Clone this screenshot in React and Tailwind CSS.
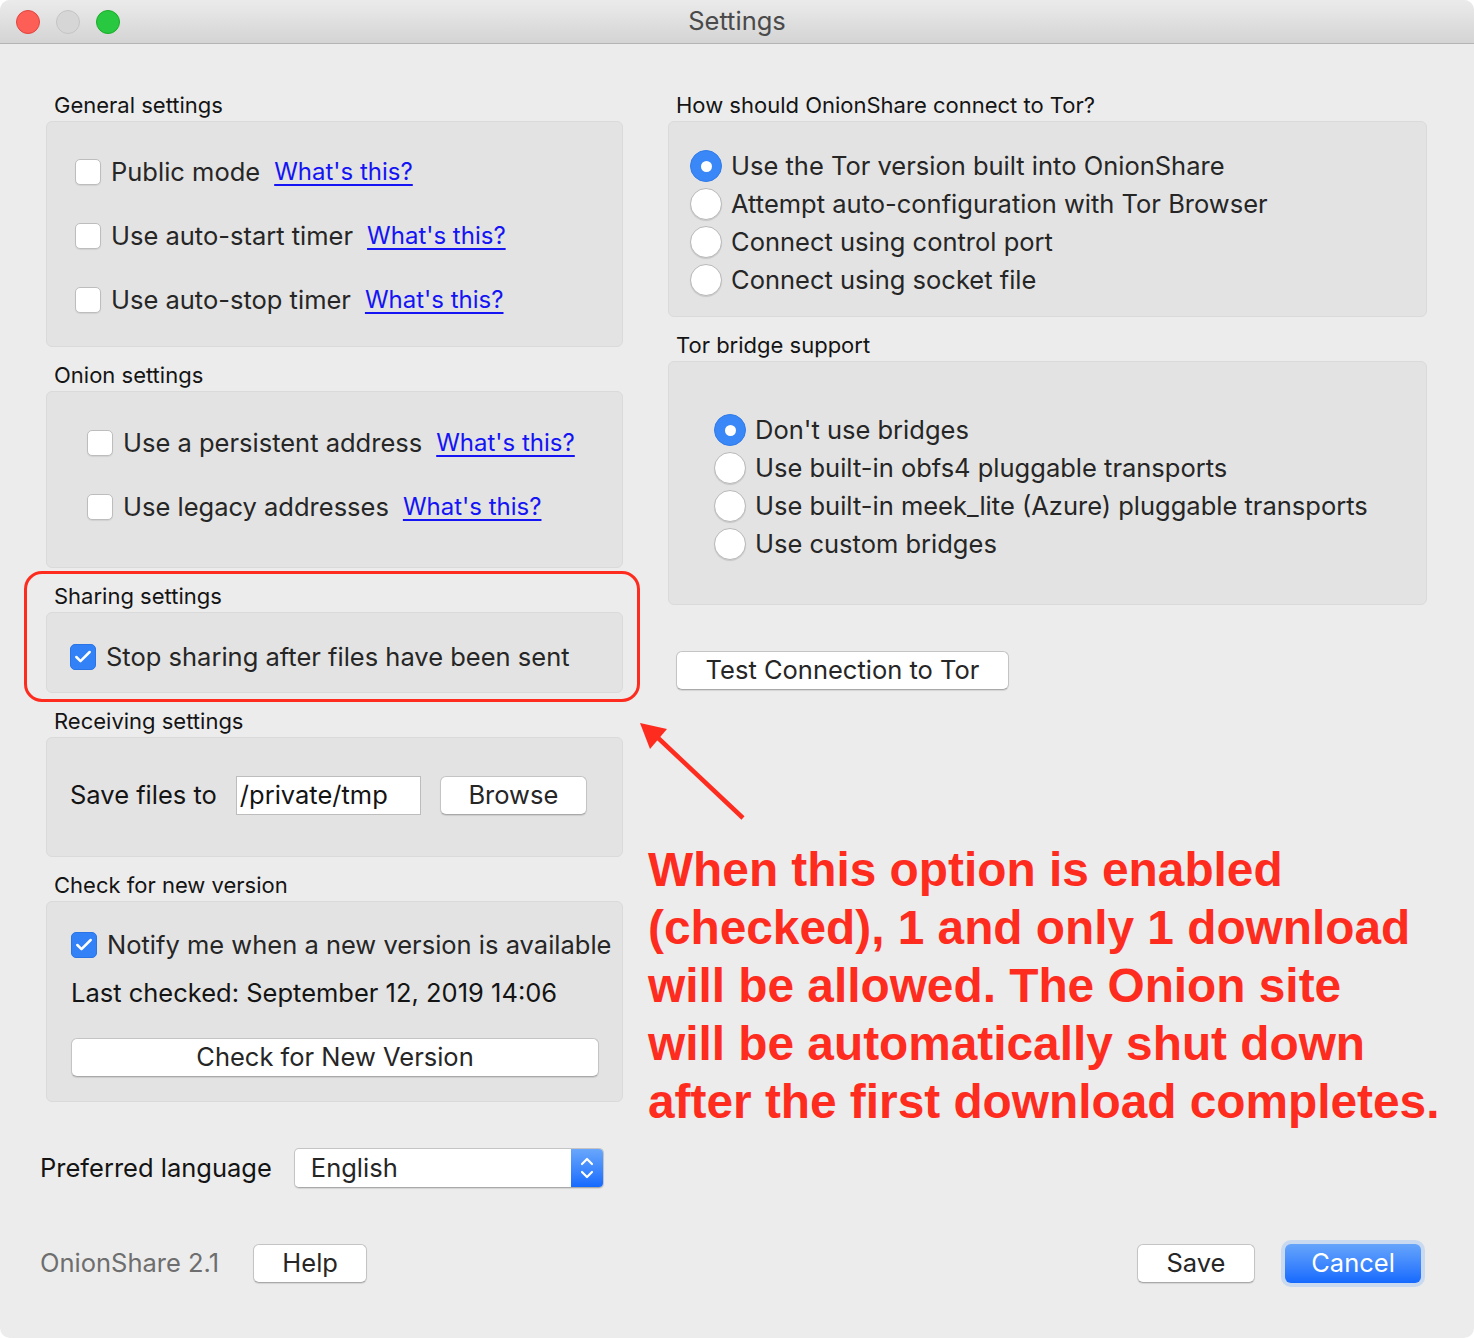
import { Check } from 'lucide-react';

const ui = { fontFamily: 'Inter, "Noto Sans", sans-serif' };

const Checkbox = ({ checked }) => (
  <span
    className={`w-[26px] h-[26px] shrink-0 rounded-[5px] flex items-center justify-center ${
      checked
        ? 'bg-[#3281f6] border border-[#2a74e6]'
        : 'bg-white border border-[#bdbdbd] shadow-[0_1px_1px_rgba(0,0,0,0.08)]'
    }`}
  >
    {checked && <Check size={20} strokeWidth={3} className="text-white" />}
  </span>
);

const Radio = ({ on }) => (
  <span
    className={`w-[32px] h-[32px] shrink-0 rounded-full flex items-center justify-center ${
      on
        ? 'bg-[#3a87f7] border border-[#2f7bea]'
        : 'bg-white border border-[#b9b9b9] shadow-[0_1px_1px_rgba(0,0,0,0.12)]'
    }`}
  >
    {on && <span className="w-[11px] h-[11px] rounded-full bg-white" />}
  </span>
);

const Link = ({ children }) => (
  <span className="text-[#1414f5] underline underline-offset-[4px] decoration-[1.5px]">{children}</span>
);

const Group = ({ label, className = '', children }) => (
  <div>
    <div className="text-[22px] leading-[28px] text-[#141414] pl-[8px] mb-[2px]">{label}</div>
    <div className={`bg-[#e3e3e3] border border-[#dadada] rounded-[6px] ${className}`}>{children}</div>
  </div>
);

const Button = ({ children, className = '' }) => (
  <button
    className={`h-[39px] bg-white rounded-[6px] border border-[#c4c4c4] border-b-[#a9a9a9] shadow-[0_1px_1px_rgba(0,0,0,0.1)] text-[25.5px] text-[#262626] flex items-center justify-center whitespace-nowrap ${className}`}
  >
    {children}
  </button>
);

const CheckRow = ({ checked, text, link, indent = 'pl-[28px]' }) => (
  <div className={`h-[64px] flex items-center whitespace-nowrap ${indent}`}>
    <Checkbox checked={checked} />
    <span className="ml-[10px] text-[25.5px] text-[#262626]">{text}</span>
    {link && <span className="ml-[14px] text-[24px]"><Link>What's this?</Link></span>}
  </div>
);

const RadioRow = ({ on, text }) => (
  <div className="h-[38px] flex items-center whitespace-nowrap">
    <Radio on={on} />
    <span className="ml-[9px] text-[25.5px] text-[#262626]">{text}</span>
  </div>
);

export default function App() {
  return (
    <div className="w-[1474px] h-[1338px] bg-white" style={ui}>
      <div className="relative h-full rounded-[10px] bg-[#ececec] overflow-hidden">
        {/* title bar */}
        <div className="h-[44px] bg-gradient-to-b from-[#ebebeb] to-[#d4d4d4] border-b border-[#b4b4b4] relative flex items-center justify-center">
          <div className="absolute left-[16px] top-[10px] flex gap-[16px]">
            <span className="w-[24px] h-[24px] rounded-full bg-[#fd5f57] border border-[#e0443e]" />
            <span className="w-[24px] h-[24px] rounded-full bg-[#d6d6d6] border border-[#c4c4c4]" />
            <span className="w-[24px] h-[24px] rounded-full bg-[#28c840] border border-[#1aab29]" />
          </div>
          <span className="text-[25.5px] text-[#4a4a4a]">Settings</span>
        </div>

        <div className="px-[40px] pt-[47px]">
          <div className="flex gap-[45px] items-start">
            {/* left column */}
            <div className="w-[583px]">
              <div className="ml-[6px] w-[577px] flex flex-col gap-[14px]">
                <Group label="General settings" className="pt-[18px] pb-[14px]">
                  <CheckRow text="Public mode" link />
                  <CheckRow text="Use auto-start timer" link />
                  <CheckRow text="Use auto-stop timer" link />
                </Group>

                <Group label="Onion settings" className="pt-[19px] pb-[28px]">
                  <CheckRow text="Use a persistent address" link indent="pl-[40px]" />
                  <CheckRow text="Use legacy addresses" link indent="pl-[40px]" />
                </Group>

                <div className="relative">
                  <div className="absolute left-[-22px] right-[-17px] top-[-11px] bottom-[-9px] border-[3px] border-[#fe2c1f] rounded-[18px] pointer-events-none" />
                  <Group label="Sharing settings" className="pt-[12px] pb-[3px]">
                    <CheckRow checked text="Stop sharing after files have been sent" indent="pl-[23px]" />
                  </Group>
                </div>

                <Group label="Receiving settings" className="pt-[37px] pb-[41px]">
                  <div className="h-[40px] flex items-center pl-[23px] whitespace-nowrap">
                    <span className="text-[25.5px] text-[#141414]">Save files to</span>
                    <div className="ml-[19px] w-[185px] h-[39px] bg-white border border-[#bdbdbd] flex items-center px-[3px] text-[25.5px] text-[#141414]">
                      /private/tmp
                    </div>
                    <Button className="ml-[19px] w-[147px]">Browse</Button>
                  </div>
                </Group>

                <Group label="Check for new version" className="pt-[24px] pb-[24px] px-[24px]">
                  <div className="h-[38px] flex items-center whitespace-nowrap">
                    <Checkbox checked />
                    <span className="ml-[10px] text-[25.5px] text-[#262626]">Notify me when a new version is available</span>
                  </div>
                  <div className="h-[38px] mt-[10px] flex items-center text-[25.5px] text-[#141414] whitespace-nowrap">
                    Last checked: September 12, 2019 14:06
                  </div>
                  <Button className="mt-[26px] w-[528px]">Check for New Version</Button>
                </Group>
              </div>

              <div className="mt-[46px] flex items-center whitespace-nowrap">
                <span className="text-[25.5px] text-[#141414]">Preferred language</span>
                <div className="ml-[22px] w-[310px] h-[40px] bg-white rounded-[5px] border border-[#c4c4c4] border-b-[#a9a9a9] shadow-[0_1px_1px_rgba(0,0,0,0.1)] flex overflow-hidden">
                  <span className="flex-1 flex items-center pl-[16px] text-[25.5px] text-[#262626]">English</span>
                  <span className="w-[32px] bg-gradient-to-b from-[#69a7fb] to-[#1369fe] flex items-center justify-center">
                    <svg width="16" height="28" viewBox="0 0 16 28" fill="none" stroke="white" strokeWidth="2.2" strokeLinecap="round" strokeLinejoin="round">
                      <path d="M3 10 L8 5 L13 10" />
                      <path d="M3 18 L8 23 L13 18" />
                    </svg>
                  </span>
                </div>
              </div>
            </div>

            {/* right column */}
            <div className="w-[759px] flex flex-col">
              <Group label="How should OnionShare connect to Tor?" className="pt-[25px] pb-[17px] pl-[21px]">
                <RadioRow on text="Use the Tor version built into OnionShare" />
                <RadioRow text="Attempt auto-configuration with Tor Browser" />
                <RadioRow text="Connect using control port" />
                <RadioRow text="Connect using socket file" />
              </Group>

              <div className="mt-[14px]">
                <Group label="Tor bridge support" className="pt-[49px] pb-[41px] pl-[45px]">
                  <RadioRow on text="Don't use bridges" />
                  <RadioRow text="Use built-in obfs4 pluggable transports" />
                  <RadioRow text="Use built-in meek_lite (Azure) pluggable transports" />
                  <RadioRow text="Use custom bridges" />
                </Group>
              </div>

              <Button className="mt-[46px] ml-[8px] w-[333px]">Test Connection to Tor</Button>

              <div
                className="mt-[151px] -ml-[20px] w-[800px] text-[47.8px] leading-[58px] font-bold text-[#fe2c1f] whitespace-nowrap"
                style={{ fontFamily: '"Liberation Sans", Arial, sans-serif' }}
              >
                When this option is enabled
                <br />
                (checked), 1 and only 1 download
                <br />
                will be allowed. The Onion site
                <br />
                will be automatically shut down
                <br />
                after the first download completes.
              </div>
            </div>
          </div>

          {/* bottom row */}
          <div className="mt-[52px] flex items-center whitespace-nowrap">
            <span className="text-[25.5px] text-[#6e6e6e]">OnionShare 2.1</span>
            <Button className="ml-[34px] w-[114px]">Help</Button>
            <div className="flex-1" />
            <Button className="w-[118px]">Save</Button>
            <div className="ml-[26px] p-[4px] rounded-[10px] bg-[#c9d9ef]">
              <button className="w-[136px] h-[39px] rounded-[6px] bg-gradient-to-b from-[#66a4fb] to-[#1569fe] text-white text-[25.5px] flex items-center justify-center">
                Cancel
              </button>
            </div>
            <div className="w-[9px]" />
          </div>
        </div>

        {/* annotation arrow */}
        <svg className="absolute left-[636px] top-[716px]" width="112" height="108" viewBox="0 0 112 108">
          <line x1="107" y1="102" x2="20" y2="20" stroke="#fe2c1f" strokeWidth="4.5" />
          <polygon points="4,7 31,13 14,33" fill="#fe2c1f" />
        </svg>
      </div>
    </div>
  );
}
